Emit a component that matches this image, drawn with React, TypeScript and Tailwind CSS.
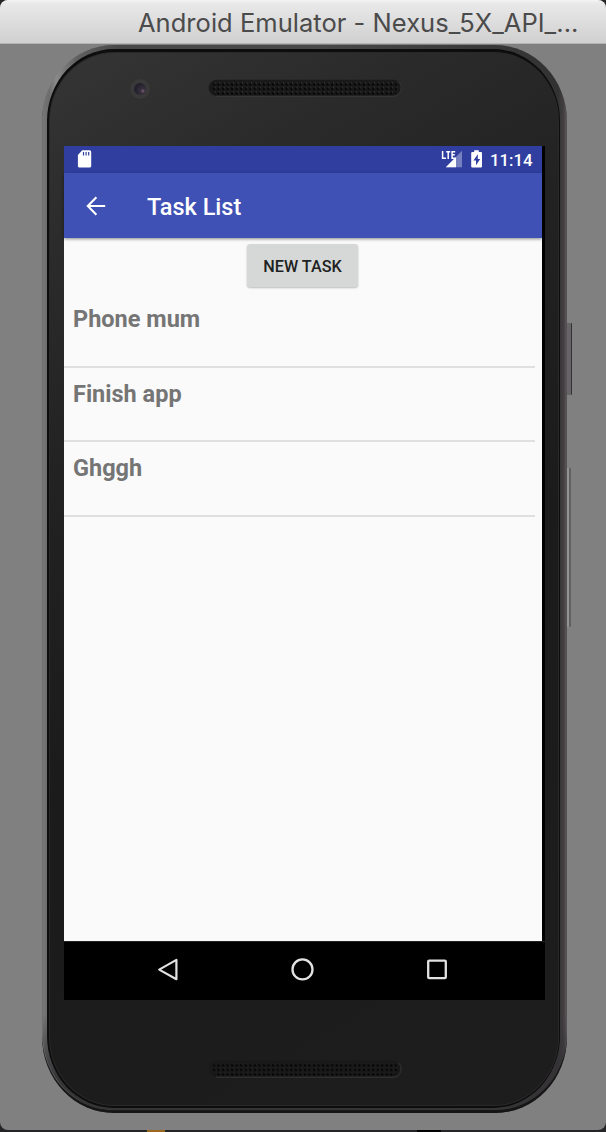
import React from "react";

function Speaker({ id, lit }: { id: string; lit: string }) {
  return (
    <svg width="194" height="18" viewBox="0 0 194 18" className="block">
      <defs>
        <pattern id={id} x="4" y="3" width="4.55" height="4.6" patternUnits="userSpaceOnUse">
          <circle cx="2" cy="2.2" r="1.15" fill="#020202" />
          <circle cx="3.1" cy="0.9" r="0.55" fill={lit} />
        </pattern>
      </defs>
      <rect x="0.7" y="0.7" width="192.6" height="16.4" rx="8.2" fill="#191919" />
      <rect x="4" y="2.4" width="186" height="13.4" rx="6" fill={`url(#${id})`} />
      <path d="M8 17.2H185.2A8.2 8.2 0 0 0 190 2.6" fill="none" stroke="#444444" strokeWidth="0.7" />
    </svg>
  );
}

function StatusBar() {
  return (
    <div className="flex h-[27px] w-full bg-[#303f9f]">
      <svg width="30" height="27" viewBox="0 0 30 27" className="block shrink-0">
        <path d="M18.2 4.3H25.6Q27.2 4.3 27.2 5.9V19.9Q27.2 21.6 25.6 21.6H15.5Q13.9 21.6 13.9 19.9V9.1Z" fill="#fff" />
        <path d="M19.5 6.1V9.6M22.1 6.1V9.6M24.7 6.1V9.6" stroke="#303f9f" strokeWidth="1.2" />
      </svg>
      <div className="ml-auto flex">
        <svg width="44" height="27" viewBox="0 0 44 27" className="block">
          <path d="M24 21.3V4.7L7.8 21.3Z" fill="#7781c0" />
          <path d="M18 21.3V11L7.8 21.3Z" fill="#fff" />
          <path d="M4.6 5V12.2H8M8.2 5.7H12.2M10.2 5.7V13M17.2 5.7H14.1V12.2H17.2M14.1 8.8H16.8" fill="none" stroke="#fff" strokeWidth="1.5" />
          <path d="M36.2 4.2H40.8V6H43Q44 6 44 7V20.4Q44 21.5 43 21.5H34.2Q33.2 21.5 33.2 20.4V7Q33.2 6 34.2 6H36.2Z" fill="#fff" />
          <path d="M39.8 8.2L35.4 14.6H38V19.2L42.2 12.9H39.8Z" fill="#303f9f" />
        </svg>
        <span className="ml-[8px] mr-[9px] w-[43px] whitespace-nowrap text-[16.8px] font-medium leading-[28px] text-white">11:14</span>
      </div>
    </div>
  );
}

function AppBar() {
  return (
    <div className="relative z-10 flex h-[65px] w-full items-center bg-[#3f51b5] shadow-[0_1px_3px_rgba(0,0,0,0.45)]">
      <svg width="20" height="20" viewBox="0 0 20 20" className="ml-[22px] block">
        <path d="M19.2 10H2M10.4 1.3L1.8 10L10.4 18.7" fill="none" stroke="#fff" strokeWidth="2.1" />
      </svg>
      <h1 className="ml-[41px] pt-[2px] text-[23.5px] font-medium leading-[30px] text-white">Task List</h1>
    </div>
  );
}

const tasks = ["Phone mum", "Finish app", "Ghggh"];

function NavigationBar() {
  return (
    <div className="flex h-[59px] w-full items-center border-t border-[#222] bg-black">
      <svg width="24" height="24" viewBox="0 0 24 24" className="mb-[2px] ml-[92px] block">
        <path d="M20.4 1.9V21.2L3.2 11.6Z" fill="none" stroke="#e2e2e2" strokeWidth="2.2" strokeLinejoin="round" />
      </svg>
      <svg width="24" height="24" viewBox="0 0 24 24" className="mb-[2px] ml-[110px] block">
        <circle cx="12.5" cy="11.4" r="10" fill="none" stroke="#e2e2e2" strokeWidth="2.3" />
      </svg>
      <svg width="24" height="24" viewBox="0 0 24 24" className="mb-[2px] ml-[111px] block">
        <rect x="3.2" y="2.6" width="17.6" height="17.6" rx="1" fill="none" stroke="#e2e2e2" strokeWidth="2.3" />
      </svg>
    </div>
  );
}

function Phone() {
  return (
    <div className="relative ml-[42px] mt-[1px] h-[1068px] w-[525px] font-[Roboto,'Liberation_Sans',sans-serif]">
      <div className="absolute left-[524px] top-[278px] h-[72px] w-[6px] rounded-r-[1px] border-r border-[#333] bg-[#676467]" />
      <div className="absolute left-[524px] top-[423px] h-[159px] w-[5px] rounded-r-[1px] border-r-2 border-[#606060] bg-[#929292]" />
      <div className="relative h-full w-full rounded-[72px/76px] bg-[linear-gradient(90deg,#7b7b7b_0px,#727272_3px,#6c6c6c_7px,#8a8a8a_14px,#606060_35px,#494949_75px,#494949_50%,#323232_516px,#454043_522px,#605e60_525px)] pb-[3px] pl-[1px] pr-[1px] shadow-[inset_0_-3px_1px_#151515]">
        <div className="h-full w-full rounded-[71px/75px] bg-[linear-gradient(180deg,transparent,transparent_91%,#353336_97%)] pb-[2px] pl-[4px] pr-[6px] pt-[4px]">
          <div className="h-full w-full rounded-[67px/72px] bg-[#0d0d0d] pb-[2px] pl-[2px] pr-[1px] pt-[3px]">
            <div className="h-full w-full rounded-[65px/69px] border border-[#292929] bg-[linear-gradient(150deg,#353536_0%,#2b2b2b_15%,#222222_32%,#1b1b1b_55%,#1d1d1d_100%)]">
              <div className="flex h-[93px] items-start">
                <div className="ml-[80px] mt-[26px] flex h-5 w-5 items-center justify-center rounded-full bg-[#393939]">
                  <div className="h-[12px] w-[12px] rounded-full bg-[radial-gradient(circle_at_74%_67%,#806077_0,#38303e_18%,#211f29_65%,#292735_100%)]" />
                </div>
                <div className="ml-[58px] mt-[26px]">
                  <Speaker id="top-speaker" lit="#555555" />
                </div>
              </div>
              <div className="ml-[14px] h-[854px] w-[481px] rounded-bl-[3px] bg-black">
                <div className="flex h-[795px] w-[478px] flex-col bg-[#fafafa]">
                  <StatusBar />
                  <AppBar />
                  <div className="flex h-[55px] pl-[183px] pt-[6px]">
                    <button className="h-[43px] w-[111px] rounded-[3px] bg-[#d6d8d7] text-[16.2px] font-medium leading-[45px] text-[#202121] shadow-[0_1px_2px_rgba(0,0,0,0.25)]">NEW TASK</button>
                  </div>
                  <ul className="w-[471px]">
                    {tasks.map((task) => (
                      <li key={task} className="flex h-[74.67px] flex-col justify-between pt-[10px]">
                        <span className="pl-[9px] text-[23.5px] font-bold leading-[32px] text-[#757575]">{task}</span>
                        <div className="h-[2px] bg-[#e0e0e0]" />
                      </li>
                    ))}
                  </ul>
                </div>
                <NavigationBar />
              </div>
              <div className="ml-[158px] mt-[60px]">
                <Speaker id="bottom-speaker" lit="#252525" />
              </div>
            </div>
          </div>
        </div>
      </div>
    </div>
  );
}

export default function App() {
  return (
    <div className="h-[1132px] w-[606px] overflow-hidden bg-[linear-gradient(90deg,#252527_0_147px,#9b681f_147px_165px,#252527_165px_417px,#020202_417px_441px,#252527_441px)]">
      <main className="h-[1130px] w-full overflow-hidden rounded-[8px] bg-[#808080]">
        <header className="flex h-11 w-full items-center border-b border-[#b5b5b5] bg-[linear-gradient(180deg,#f5f5f5_0,#e9e9e9_3px,#d0d0d0_100%)] pl-[138px]">
          <span className="whitespace-nowrap pt-[2px] font-[Inter,sans-serif] text-[25.5px] leading-[42px] tracking-[0.03px] text-[#4b4b4b]">Android Emulator - Nexus_5X_API_...</span>
        </header>
        <Phone />
      </main>
    </div>
  );
}
